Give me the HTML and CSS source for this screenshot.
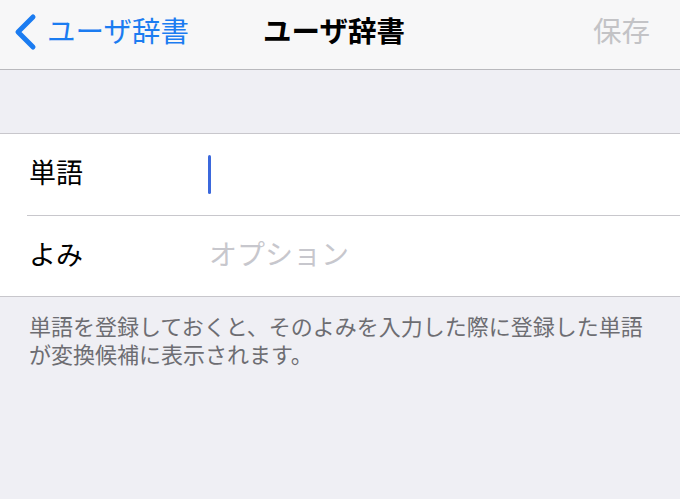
FILE: index.html
```html
<!DOCTYPE html>
<html lang="ja">
<head>
    <meta charset="UTF-8">
    <meta name="viewport" content="width=device-width, initial-scale=1.0">
    <link rel="stylesheet" href="styles.css">
    <title>ユーザ辞書</title>
</head>
<body>
    <header class="nav">
        <a class="nav-back" href="#">
            <svg class="chevron" width="26" height="38" viewBox="0 0 26 38">
                <path d="M21 4 L6 19 L21 34" fill="none" stroke="currentColor" stroke-width="5" stroke-linecap="round" stroke-linejoin="round"/>
            </svg>
            <span>ユーザ辞書</span>
        </a>
        <h1 class="nav-title">ユーザ辞書</h1>
        <span class="nav-save">保存</span>
    </header>

    <div class="spacer"></div>

    <section class="group">
        <div class="row">
            <span class="row-label">単語</span>
            <span class="row-field"><span class="caret"></span></span>
        </div>
        <div class="row">
            <span class="row-label">よみ</span>
            <span class="row-field placeholder">オプション</span>
        </div>
    </section>

    <p class="footer-note">単語を登録しておくと、そのよみを入力した際に登録した単語が変換候補に表示されます。</p>
</body>
</html>
```

FILE: styles.css
```css
* {
    margin: 0;
    padding: 0;
    box-sizing: border-box;
}

html {
    background: #efeff4;
}

body {
    font-family: "Noto Sans CJK JP", "Noto Sans", sans-serif;
    min-height: 100vh;
    color: #000;
}

.nav {
    height: 70px;
    background: #f7f7f8;
    border-bottom: 1px solid #b9b9bd;
    display: grid;
    grid-template-columns: 1fr auto 1fr;
    align-items: center;
    padding: 0 30px 8px 12px;
}

.nav-back {
    display: flex;
    align-items: center;
    gap: 9px;
    color: #1b7cf1;
    text-decoration: none;
    font-size: 28.5px;
    line-height: 1;
}

.chevron {
    margin-top: 2px;
}

.nav-title {
    font-size: 28.5px;
    font-weight: 700;
    line-height: 1;
    margin-left: 6px;
}

.nav-save {
    justify-self: end;
    font-size: 28.5px;
    color: #c3c3c6;
    line-height: 1;
}

.spacer {
    height: 63px;
}

.group {
    background: #fff;
    border-top: 1px solid #c8c7cc;
    border-bottom: 1px solid #c8c7cc;
    padding-left: 27px;
}

.row {
    height: 81px;
    display: flex;
    align-items: center;
}

.row + .row {
    border-top: 1px solid #c8c7cc;
}

.row-label {
    width: 181px;
    padding-left: 2px;
    margin-bottom: 6px;
    font-size: 27px;
}

.row-field {
    font-size: 28px;
    display: flex;
    align-items: center;
}

.caret {
    display: block;
    width: 3px;
    height: 39px;
    border-radius: 2px;
    background: #3b68dc;
}

.placeholder {
    color: #c7c7cd;
    padding-left: 1px;
    margin-bottom: 6px;
}

.footer-note {
    padding: 14px 30px 0 29px;
    font-size: 22px;
    line-height: 28px;
    color: #6d6d72;
}
```
